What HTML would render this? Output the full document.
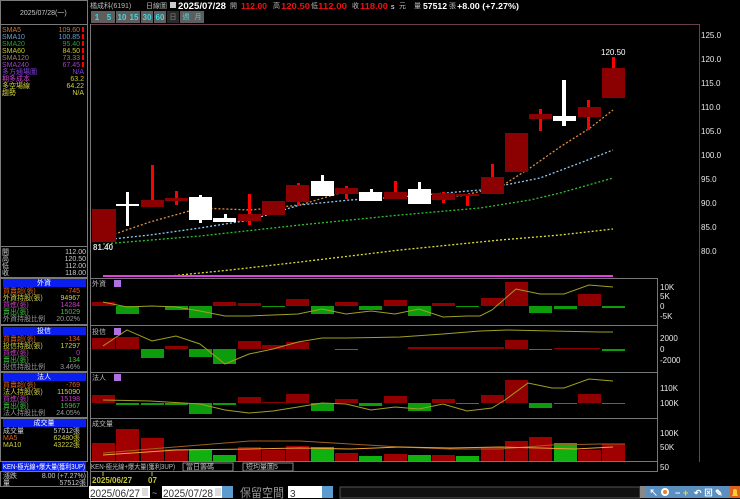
<!DOCTYPE html>
<html><head><meta charset="utf-8"><style>
html,body{margin:0;padding:0;background:#000;width:740px;height:499px;overflow:hidden}
svg{display:block}
text{font-family:"Liberation Sans","Noto Sans CJK TC",sans-serif}
.s{font-size:7px}
.ax{font-size:8px;fill:#e8e8e8;font-family:"DejaVu Sans",sans-serif}
</style></head><body>
<svg width="740" height="499" viewBox="0 0 740 499" xmlns="http://www.w3.org/2000/svg">
<rect width="740" height="499" fill="#000"/>
<g fill="none" stroke="#7a7a7a" stroke-width="1">
<rect x="0.5" y="0.5" width="87" height="24"/>
<rect x="0.5" y="24.5" width="87" height="222"/>
<rect x="0.5" y="246.5" width="87" height="31"/>
<rect x="0.5" y="278.5" width="87" height="46"/>
<rect x="0.5" y="325.5" width="87" height="46"/>
<rect x="0.5" y="372.5" width="87" height="45"/>
<rect x="0.5" y="418.5" width="87" height="43"/>
<rect x="0.5" y="471.5" width="87" height="15"/>
</g>
<text x="20" y="15" class="s" fill="#ccc">2025/07/28(一)</text>
<g class="s">
<text x="2" y="32" fill="#c87533">SMA5</text><text x="80" y="32" text-anchor="end" fill="#c87533">109.60</text>
<text x="2" y="39" fill="#6aa0d0">SMA10</text><text x="80" y="39" text-anchor="end" fill="#6aa0d0">100.85</text>
<text x="2" y="46" fill="#2aa02a">SMA20</text><text x="80" y="46" text-anchor="end" fill="#2aa02a">95.40</text>
<text x="2" y="53" fill="#c8c830">SMA60</text><text x="80" y="53" text-anchor="end" fill="#c8c830">84.50</text>
<text x="2" y="60" fill="#a08060">SMA120</text><text x="80" y="60" text-anchor="end" fill="#a08060">73.33</text>
<text x="2" y="67" fill="#a040c0">SMA240</text><text x="80" y="67" text-anchor="end" fill="#a040c0">67.45</text>
<text x="2" y="74" fill="#8040e0">多方通場圖</text><text x="84" y="74" text-anchor="end" fill="#8040e0">N/A</text>
<text x="2" y="81" fill="#d040d0">期多成本</text><text x="84" y="81" text-anchor="end" fill="#c8c830">63.2</text>
<text x="2" y="88" fill="#d0d040">多空場線</text><text x="84" y="88" text-anchor="end" fill="#d0d040">64.22</text>
<text x="2" y="95" fill="#d0d040">趨勢</text><text x="84" y="95" text-anchor="end" fill="#d0d040">N/A</text>
</g>
<g fill="#f00"><rect x="82" y="27" width="2" height="5"/><rect x="82" y="34" width="2" height="5"/><rect x="82" y="41" width="2" height="5"/><rect x="82" y="48" width="2" height="5"/><rect x="82" y="55" width="2" height="5"/><rect x="82" y="62" width="2" height="5"/></g>
<g class="s" fill="#ccc">
<text x="2" y="254">開</text><text x="86" y="254" text-anchor="end">112.00</text>
<text x="2" y="261">高</text><text x="86" y="261" text-anchor="end">120.50</text>
<text x="2" y="268">低</text><text x="86" y="268" text-anchor="end">112.00</text>
<text x="2" y="275">收</text><text x="86" y="275" text-anchor="end">118.00</text>
</g>
<g fill="#0a1ef0"><rect x="3" y="279" width="83" height="8"/><rect x="3" y="327" width="83" height="8"/><rect x="3" y="373" width="83" height="8"/><rect x="3" y="419" width="83" height="8"/><rect x="2" y="462" width="84" height="9"/></g>
<g class="s" fill="#fff" text-anchor="middle"><text x="44" y="285">外資</text><text x="44" y="333">投信</text><text x="44" y="379">法人</text><text x="44" y="425">成交量</text></g>
<g class="s">
<text x="3" y="293" fill="#e06020">買賣超(張)</text><text x="80" y="293" text-anchor="end" fill="#e06020">-745</text>
<text x="3" y="300" fill="#d0d040">外資持股(張)</text><text x="80" y="300" text-anchor="end" fill="#d0d040">94967</text>
<text x="3" y="307" fill="#c040c0">買進(張)</text><text x="80" y="307" text-anchor="end" fill="#c040c0">14284</text>
<text x="3" y="314" fill="#40c040">賣出(張)</text><text x="80" y="314" text-anchor="end" fill="#40c040">15029</text>
<text x="3" y="321" fill="#999">外資持股比例</text><text x="80" y="321" text-anchor="end" fill="#999">20.02%</text>
<text x="3" y="341" fill="#e06020">買賣超(張)</text><text x="80" y="341" text-anchor="end" fill="#e06020">-134</text>
<text x="3" y="348" fill="#d0d040">投信持股(張)</text><text x="80" y="348" text-anchor="end" fill="#d0d040">17297</text>
<text x="3" y="355" fill="#c040c0">買進(張)</text><text x="80" y="355" text-anchor="end" fill="#c040c0">0</text>
<text x="3" y="362" fill="#40c040">賣出(張)</text><text x="80" y="362" text-anchor="end" fill="#40c040">134</text>
<text x="3" y="369" fill="#999">投信持股比例</text><text x="80" y="369" text-anchor="end" fill="#999">3.46%</text>
<text x="3" y="387" fill="#e06020">買賣超(張)</text><text x="80" y="387" text-anchor="end" fill="#e06020">-769</text>
<text x="3" y="394" fill="#d0d040">法人持股(張)</text><text x="80" y="394" text-anchor="end" fill="#d0d040">115090</text>
<text x="3" y="401" fill="#c040c0">買進(張)</text><text x="80" y="401" text-anchor="end" fill="#c040c0">15198</text>
<text x="3" y="408" fill="#40c040">賣出(張)</text><text x="80" y="408" text-anchor="end" fill="#40c040">15967</text>
<text x="3" y="415" fill="#999">法人持股比例</text><text x="80" y="415" text-anchor="end" fill="#999">24.05%</text>
<text x="3" y="433" fill="#ccc">成交量</text><text x="80" y="433" text-anchor="end" fill="#ccc">57512張</text>
<text x="3" y="440" fill="#e06020">MA5</text><text x="80" y="440" text-anchor="end" fill="#d0d040">62480張</text>
<text x="3" y="447" fill="#d0d040">MA10</text><text x="80" y="447" text-anchor="end" fill="#d0d040">43222張</text>
<text x="3" y="469" fill="#fff" textLength="82" lengthAdjust="spacingAndGlyphs">KEN-極光線+爆大量(獲利3UP)</text>
<text x="3" y="478" fill="#ccc">漲跌</text><text x="86" y="478" text-anchor="end" fill="#ccc">8.00 (+7.27%)</text>
<text x="3" y="485" fill="#ccc">量</text><text x="86" y="485" text-anchor="end" fill="#ccc">57512張</text>
</g>
<text x="90" y="8" class="s" fill="#bbb">橘成科(6191)</text>
<text x="146" y="8" class="s" fill="#bbb">日線圖</text>
<rect x="170" y="2" width="6" height="6" fill="#ccc"/>
<text x="178" y="9" font-size="9" font-weight="bold" fill="#fff" textLength="48" lengthAdjust="spacingAndGlyphs">2025/07/28</text>
<g class="s" fill="#bbb"><text x="230" y="8">開</text><text x="273" y="8">高</text><text x="311" y="8">低</text><text x="352" y="8">收</text><text x="399" y="8">元</text><text x="414" y="8">量</text><text x="449" y="8">張</text></g>
<g font-size="8" font-weight="bold" fill="#f01010"><text x="241" y="9" textLength="26" lengthAdjust="spacingAndGlyphs">112.00</text><text x="281" y="9" textLength="29" lengthAdjust="spacingAndGlyphs">120.50</text><text x="318" y="9" textLength="29" lengthAdjust="spacingAndGlyphs">112.00</text><text x="360" y="9" textLength="28" lengthAdjust="spacingAndGlyphs">118.00</text></g>
<text x="391" y="9" font-size="7" fill="#fff">s</text>
<text x="423" y="9" font-size="8" font-weight="bold" fill="#fff" textLength="24" lengthAdjust="spacingAndGlyphs">57512</text>
<text x="457" y="9" font-size="8" font-weight="bold" fill="#fff" textLength="62" lengthAdjust="spacingAndGlyphs">+8.00 (+7.27%)</text>
<g fill="#5e5e5e"><rect x="91" y="11" width="12" height="12"/><rect x="103" y="11" width="12" height="12"/><rect x="116" y="11" width="12" height="12"/><rect x="128" y="11" width="12" height="12"/><rect x="141" y="11" width="12" height="12"/><rect x="154" y="11" width="12" height="12"/><rect x="180" y="11" width="12" height="12"/><rect x="192" y="11" width="12" height="12"/></g>
<rect x="167" y="11" width="12" height="12" fill="#2a2a2a"/>
<g font-size="8" font-weight="bold" fill="#40d8e0" text-anchor="middle"><text x="97" y="20">1</text><text x="109" y="20">5</text><text x="122" y="20">10</text><text x="134" y="20">15</text><text x="147" y="20">30</text><text x="160" y="20">60</text></g>
<g class="s" text-anchor="middle"><text x="173" y="19" fill="#888">日</text><text x="186" y="19" fill="#40d8e0">週</text><text x="198" y="19" fill="#40d8e0">月</text></g>
<line x1="90" y1="24.5" x2="699" y2="24.5" stroke="#6a4050"/>
<line x1="699.5" y1="24" x2="699.5" y2="462" stroke="#6a4050"/>
<line x1="90.5" y1="24" x2="90.5" y2="499" stroke="#777"/>
<g fill="none" stroke="#777"><line x1="90" y1="278.5" x2="658" y2="278.5"/><line x1="90" y1="325.5" x2="658" y2="325.5"/><line x1="90" y1="372.5" x2="658" y2="372.5"/><line x1="90" y1="418.5" x2="658" y2="418.5"/><line x1="90" y1="461.5" x2="658" y2="461.5"/><line x1="90" y1="471.5" x2="658" y2="471.5"/><line x1="657.5" y1="278" x2="657.5" y2="472"/></g>
<g class="ax"><text x="701" y="38">125.0</text><text x="701" y="62">120.0</text><text x="701" y="86">115.0</text><text x="701" y="110">110.0</text><text x="701" y="134">105.0</text><text x="701" y="158">100.0</text><text x="701" y="182">95.0</text><text x="701" y="206">90.0</text><text x="701" y="230">85.0</text><text x="701" y="254">80.0</text>
<text x="660" y="290">10K</text><text x="660" y="299">5K</text><text x="660" y="309">0</text><text x="660" y="319">-5K</text>
<text x="660" y="341">2000</text><text x="660" y="352">0</text><text x="660" y="363">-2000</text>
<text x="660" y="391">110K</text><text x="660" y="406">100K</text>
<text x="660" y="436">100K</text><text x="660" y="450">50K</text><text x="660" y="470">50</text></g>
<g fill="none" stroke-width="1.3" stroke-dasharray="2 2">
<polyline stroke="#e09040" points="103,238 150,222 200,208 250,210 300,205 340,193 400,193 460,196 500,187 530,168 560,147 590,128 613,110"/>
<polyline stroke="#90c8f0" points="103,240 150,235 200,228 250,220 300,205 350,200 400,197 480,190 540,178 580,163 613,150"/>
<polyline stroke="#30c030" points="103,244 200,236 300,225 400,215 480,208 530,200 560,193 613,178"/>
<polyline stroke="#e0e030" points="170,276 230,270 300,262 400,250 500,240 560,235 613,229"/>
</g>
<line x1="103" y1="276" x2="613" y2="276" stroke="#e040e0" stroke-width="2"/>
<g fill="#f00">
<rect x="151" y="165" width="3" height="42"/><rect x="175" y="191" width="3" height="14"/><rect x="248" y="194" width="3" height="31"/><rect x="297" y="183" width="3" height="23"/><rect x="345" y="186" width="3" height="13"/><rect x="394" y="181" width="3" height="16"/><rect x="442" y="192" width="3" height="11"/><rect x="466" y="194" width="3" height="12"/><rect x="491" y="164" width="3" height="30"/><rect x="539" y="109" width="3" height="22"/><rect x="587" y="100" width="3" height="30"/><rect x="612" y="57" width="3" height="12"/>
</g>
<g fill="#8b0000">
<rect x="92" y="209" width="24" height="33"/><rect x="141" y="200" width="23" height="7"/><rect x="165" y="198" width="23" height="3"/><rect x="238" y="214" width="23" height="7"/><rect x="262" y="201" width="23" height="14"/><rect x="286" y="185" width="23" height="17"/><rect x="335" y="188" width="23" height="6"/><rect x="384" y="192" width="23" height="7"/><rect x="432" y="193" width="23" height="7"/><rect x="456" y="194" width="23" height="2"/><rect x="481" y="177" width="23" height="17"/><rect x="505" y="133" width="23" height="39"/><rect x="529" y="114" width="23" height="5"/><rect x="578" y="107" width="23" height="10"/><rect x="602" y="68" width="23" height="30"/>
</g>
<g fill="#fff">
<rect x="126" y="192" width="3" height="34"/><rect x="116" y="204" width="23" height="2"/>
<rect x="189" y="197" width="23" height="23"/><rect x="199" y="195" width="3" height="28"/>
<rect x="213" y="218" width="23" height="4"/><rect x="224" y="214" width="3" height="8"/>
<rect x="311" y="181" width="23" height="15"/><rect x="321" y="175" width="3" height="21"/>
<rect x="359" y="192" width="23" height="9"/><rect x="370" y="189" width="3" height="8"/>
<rect x="408" y="189" width="23" height="15"/><rect x="418" y="182" width="3" height="22"/>
<rect x="562" y="80" width="4" height="46"/><rect x="553" y="116" width="23" height="5"/>
</g>
<text x="93" y="250" font-size="8" font-weight="bold" fill="#ddd">81.40</text>
<text x="601" y="55" font-size="8" fill="#fff">120.50</text>
<g class="s" fill="#bbb"><text x="92" y="286">外資</text><text x="92" y="334">投信</text><text x="92" y="380">法人</text><text x="92" y="426">成交量</text></g>
<g fill="#b070e0"><rect x="114" y="280" width="7" height="7"/><rect x="114" y="328" width="7" height="7"/><rect x="114" y="374" width="7" height="7"/></g>
<g fill="#900000"><rect x="92" y="302" width="23" height="4"/><rect x="213" y="302" width="23" height="4"/><rect x="238" y="303" width="23" height="3"/><rect x="286" y="299" width="23" height="7"/><rect x="335" y="302" width="23" height="4"/><rect x="384" y="300" width="23" height="6"/><rect x="432" y="303" width="23" height="3"/><rect x="481" y="298" width="23" height="8"/><rect x="505" y="282" width="23" height="24"/><rect x="578" y="294" width="23" height="12"/></g>
<g fill="#0c9c0c"><rect x="116" y="306" width="23" height="8"/><rect x="165" y="306" width="23" height="4"/><rect x="189" y="306" width="23" height="12"/><rect x="262" y="306" width="23" height="1"/><rect x="311" y="306" width="23" height="8"/><rect x="359" y="306" width="23" height="4"/><rect x="408" y="306" width="23" height="10"/><rect x="456" y="306" width="23" height="1"/><rect x="529" y="306" width="23" height="7"/><rect x="554" y="306" width="23" height="3"/><rect x="602" y="306" width="23" height="2"/></g>
<polyline fill="none" stroke="#a0a020" points="103,302 127,307 152,306 176,307 200,311 225,316 249,316 273,315 298,314 322,309 346,314 371,311 395,314 419,309 443,317 467,316 480,316 492,310 516,289 540,294 564,294 589,285 613,287"/>
<g fill="#900000"><rect x="92" y="338" width="23" height="11"/><rect x="116" y="337" width="23" height="12"/><rect x="165" y="346" width="23" height="3"/><rect x="238" y="341" width="23" height="8"/><rect x="262" y="345" width="23" height="4"/><rect x="286" y="342" width="23" height="7"/><rect x="408" y="347" width="96" height="2"/><rect x="505" y="340" width="23" height="9"/><rect x="554" y="348" width="46" height="1"/></g>
<g fill="#0c9c0c"><rect x="141" y="349" width="23" height="9"/><rect x="189" y="349" width="23" height="8"/><rect x="213" y="349" width="23" height="15"/><rect x="335" y="349" width="23" height="1"/><rect x="529" y="349" width="23" height="1"/><rect x="602" y="349" width="23" height="2"/></g>
<polyline fill="none" stroke="#a0a020" points="103,346 127,330 152,341 176,336 200,344 225,364 249,354 273,349 298,342 322,338 346,338 400,337 443,334 480,331 508,330 552,331 600,332 613,332"/>
<g fill="#900000"><rect x="92" y="395" width="23" height="8"/><rect x="238" y="397" width="23" height="6"/><rect x="262" y="402" width="23" height="1"/><rect x="286" y="394" width="23" height="9"/><rect x="335" y="399" width="23" height="4"/><rect x="384" y="396" width="23" height="7"/><rect x="432" y="399" width="23" height="4"/><rect x="481" y="395" width="23" height="8"/><rect x="505" y="380" width="23" height="23"/><rect x="578" y="394" width="23" height="9"/></g>
<g fill="#0c9c0c"><rect x="116" y="403" width="23" height="2"/><rect x="141" y="403" width="23" height="2"/><rect x="165" y="403" width="23" height="2"/><rect x="189" y="403" width="23" height="11"/><rect x="213" y="403" width="23" height="2"/><rect x="311" y="403" width="23" height="8"/><rect x="359" y="403" width="23" height="3"/><rect x="408" y="403" width="23" height="8"/><rect x="456" y="403" width="23" height="1"/><rect x="529" y="403" width="23" height="5"/><rect x="554" y="403" width="23" height="1"/><rect x="602" y="403" width="23" height="1"/></g>
<polyline fill="none" stroke="#a0a020" points="103,400 150,401 200,404 225,410 249,413 273,411 298,407 322,403 346,404 371,410 395,407 419,409 443,404 467,411 492,408 505,400 528,383 552,388 564,388 589,379 613,381"/>
<g fill="#a00000"><rect x="92" y="443" width="23" height="18"/><rect x="116" y="429" width="23" height="32"/><rect x="141" y="438" width="23" height="23"/><rect x="165" y="449" width="23" height="12"/><rect x="238" y="447" width="23" height="14"/><rect x="262" y="450" width="23" height="11"/><rect x="286" y="446" width="23" height="15"/><rect x="335" y="453" width="23" height="8"/><rect x="384" y="454" width="23" height="7"/><rect x="432" y="455" width="23" height="6"/><rect x="481" y="447" width="23" height="14"/><rect x="505" y="441" width="23" height="20"/><rect x="529" y="437" width="23" height="24"/><rect x="578" y="450" width="23" height="11"/><rect x="602" y="444" width="23" height="17"/></g>
<g fill="#10b010"><rect x="189" y="449" width="23" height="12"/><rect x="213" y="455" width="23" height="6"/><rect x="311" y="447" width="23" height="14"/><rect x="359" y="456" width="23" height="5"/><rect x="408" y="455" width="23" height="6"/><rect x="456" y="456" width="23" height="5"/><rect x="554" y="443" width="23" height="18"/></g>
<polyline fill="none" stroke="#a06020" points="103,453 150,449 200,445 250,441 300,441 350,444 400,447 450,449 500,449 552,445 600,444 625,444"/>
<polyline fill="none" stroke="#f0a030" points="103,455 176,450 250,449 300,448 350,449 400,447 450,448 500,447 540,448 575,449 613,447"/>
<text x="91" y="469" class="s" fill="#bbb" textLength="84" lengthAdjust="spacingAndGlyphs">KEN-極光線+爆大量(獲利3UP)</text>
<rect x="183" y="463" width="50" height="8" fill="none" stroke="#888"/><text x="186" y="469" class="s" fill="#bbb">當日籌碼</text>
<rect x="243" y="463" width="50" height="8" fill="none" stroke="#888"/><text x="246" y="469" class="s" fill="#bbb">短均量圖5</text>
<line x1="103" y1="472" x2="103" y2="476" stroke="#c0c040"/><line x1="152" y1="472" x2="152" y2="476" stroke="#c0c040"/>
<text x="92" y="483" font-size="8" font-weight="bold" fill="#c8c830">2025/06/27</text>
<text x="148" y="483" font-size="8" font-weight="bold" fill="#c8c830">07</text>
<rect x="89" y="486" width="61" height="12" fill="#fff"/><text x="90" y="497" font-size="11" fill="#333" textLength="50" lengthAdjust="spacingAndGlyphs">2025/06/27</text>
<rect x="142" y="488" width="6" height="8" fill="#ddd"/>
<text x="152" y="496" font-size="9" fill="#aaa">~</text>
<rect x="162" y="486" width="60" height="12" fill="#fff"/><text x="163" y="497" font-size="11" fill="#333" textLength="50" lengthAdjust="spacingAndGlyphs">2025/07/28</text>
<rect x="215" y="488" width="6" height="8" fill="#ddd"/>
<rect x="222" y="486" width="11" height="12" fill="#5b9bd0"/>
<text x="240" y="497" font-size="12" fill="#999" font-family="'Noto Sans CJK TC',sans-serif" textLength="44" lengthAdjust="spacingAndGlyphs">保留空間</text>
<rect x="288" y="486" width="34" height="12" fill="#fff"/><text x="290" y="497" font-size="10" fill="#333">3</text>
<rect x="322" y="486" width="11" height="12" fill="#5b9bd0"/>
<rect x="340" y="487" width="300" height="11" fill="#111" stroke="#555"/>
<rect x="640" y="486" width="6" height="12" fill="#888"/>
<rect x="646" y="486" width="84" height="12" fill="#5b8fc0"/>
<g font-size="9" fill="#fff" font-weight="bold"><text x="649" y="496">↖</text><text x="675" y="496">−</text><text x="683" y="496" fill="#f0e020">+</text><text x="694" y="496">↶</text><text x="704" y="496">⊠</text><text x="715" y="496">✎</text></g>
<circle cx="665" cy="492" r="4" fill="#fff"/><circle cx="665" cy="492" r="2" fill="#f08020"/>
<rect x="730" y="486" width="10" height="12" fill="#e06020"/>
<path d="M732 496 h6 l-1 -2 v-3 a2 2 0 0 0 -4 0 v3 z" fill="#f8d030"/>
</svg>
</body></html>
